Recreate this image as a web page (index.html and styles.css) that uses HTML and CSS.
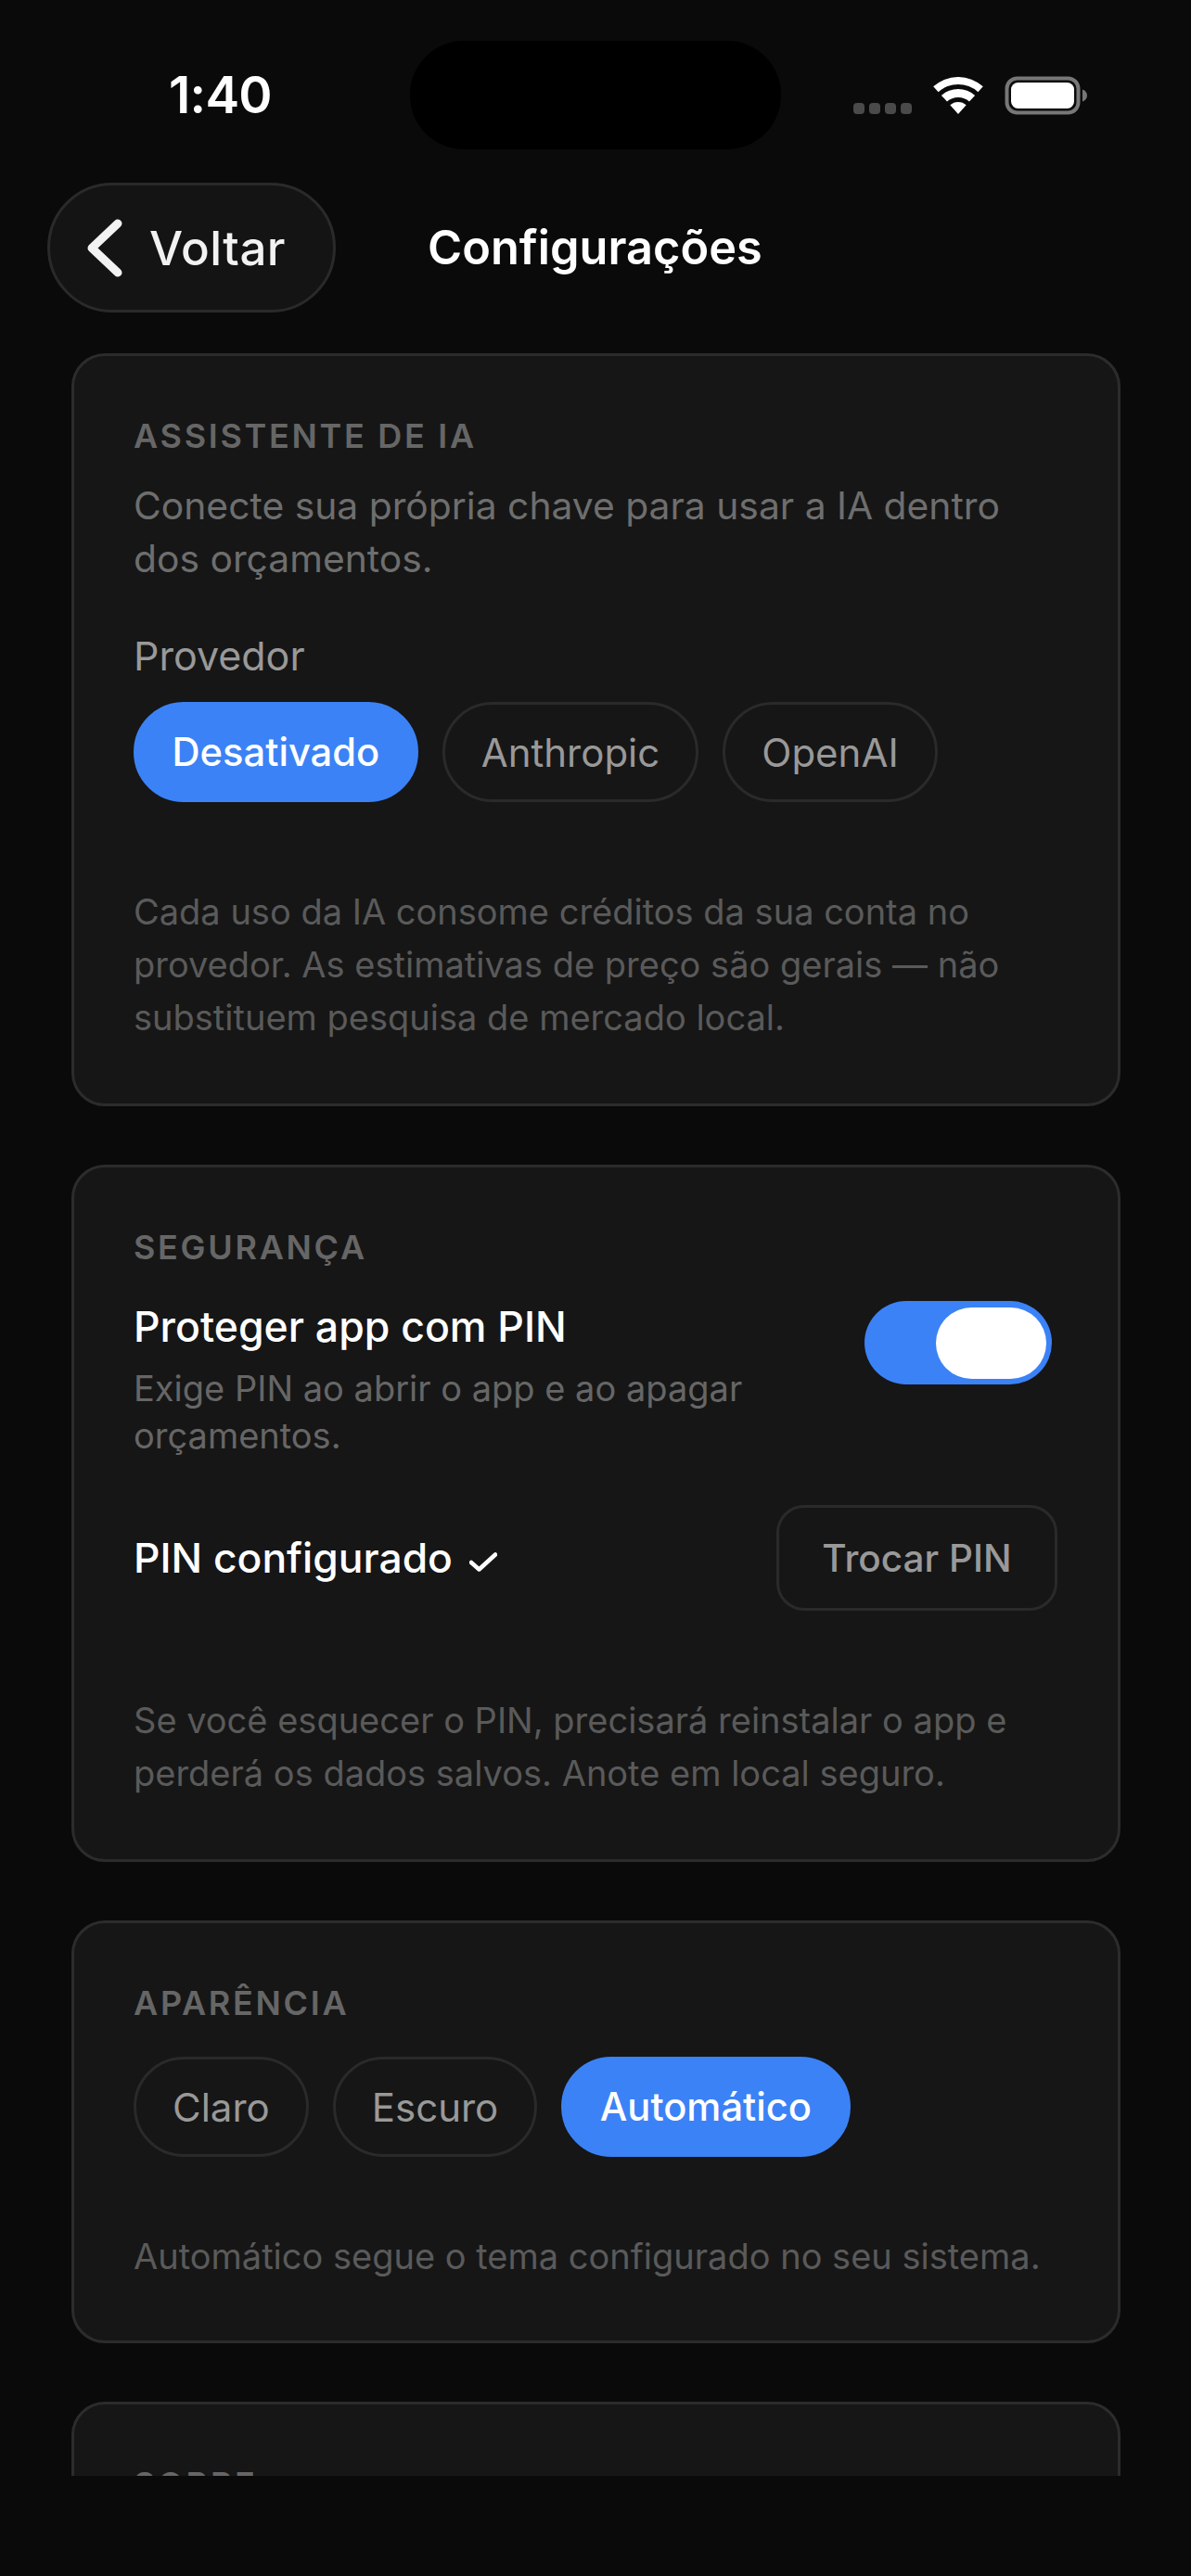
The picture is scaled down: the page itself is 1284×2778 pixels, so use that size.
FILE: index.html
```html
<!DOCTYPE html>
<html lang="pt-BR">
<head>
<meta charset="utf-8">
<title>Configurações</title>
<link rel="stylesheet" href="styles.css">
</head>
<body>
<div class="screen">
  <div class="status">
    <div class="time">1:40</div>
    <div class="island"></div>
    <div class="status-icons">
      <div class="signal"><i></i><i></i><i></i><i></i></div>
      <svg class="wifi" width="54" height="40" viewBox="0 0 54 40"><path fill="#fff" d="M.2 10.3A40 40 0 0 1 53.8 10.3L48.4 16.2A32 32 0 0 0 5.6 16.2Z"/><path fill="#fff" d="M8.9 19.9A27 27 0 0 1 45.1 19.9L39 26.6A18 18 0 0 0 15 26.6Z"/><path fill="#fff" d="M18.3 30.3A13 13 0 0 1 35.7 30.3L27 40Z"/></svg>
      <svg class="battery" width="89" height="42" viewBox="0 0 89 42"><rect x="2.5" y="2.5" width="77" height="37" rx="11" fill="none" stroke="#777" stroke-width="4"/><rect x="7" y="7" width="68" height="28" rx="7.5" fill="#fff"/><path fill="#777" d="M84 14.500C87 15.500 89 18 89 21S87 26.500 84 27.500Z"/></svg>
    </div>
  </div>
  <header class="topbar">
    <button class="back">
      <svg width="44" height="66" viewBox="0 0 44 66"><path d="M37 7 9 33.500 37 60" fill="none" stroke="#f2f2f2" stroke-width="9" stroke-linecap="round" stroke-linejoin="round"/></svg>
      <span>Voltar</span>
    </button>
    <h1 class="title">Configurações</h1>
  </header>
  <main class="scroll">
    <section class="card">
      <h2 class="label">ASSISTENTE DE IA</h2>
      <p class="desc">Conecte sua própria chave para usar a IA dentro dos orçamentos.</p>
      <div class="field">Provedor</div>
      <div class="chips chips-provider">
        <span class="chip active">Desativado</span>
        <span class="chip">Anthropic</span>
        <span class="chip">OpenAI</span>
      </div>
      <p class="note note-gap">Cada uso da IA consome créditos da sua conta no provedor. As estimativas de preço são gerais — não substituem pesquisa de mercado local.</p>
    </section>
    <section class="card">
      <h2 class="label">SEGURANÇA</h2>
      <div class="row-pin">
        <div class="row-text">
          <div class="row-title">Proteger app com PIN</div>
          <div class="row-sub">Exige PIN ao abrir o app e ao apagar orçamentos.</div>
        </div>
        <div class="toggle"><div class="knob"></div></div>
      </div>
      <div class="row-change">
        <div class="pin-state">PIN configurado <svg class="check" width="30" height="21" viewBox="0 0 30 21"><path d="M2 11 10.500 18.500 28 2.500" fill="none" stroke="#fff" stroke-width="4.500" stroke-linecap="round" stroke-linejoin="round"/></svg></div>
        <button class="outline">Trocar PIN</button>
      </div>
      <p class="note note-gap">Se você esquecer o PIN, precisará reinstalar o app e perderá os dados salvos. Anote em local seguro.</p>
    </section>
    <section class="card">
      <h2 class="label">APARÊNCIA</h2>
      <div class="chips chips-theme">
        <span class="chip">Claro</span>
        <span class="chip">Escuro</span>
        <span class="chip active">Automático</span>
      </div>
      <p class="note note-gap-small">Automático segue o tema configurado no seu sistema.</p>
    </section>
    <section class="card">
      <h2 class="label">SOBRE</h2>
    </section>
  </main>
</div>
</body>
</html>
```

FILE: styles.css
```css
* { box-sizing: border-box; }
html, body { margin: 0; padding: 0; background: #0a0a0a; }
body { font-family: Inter, "Noto Sans", sans-serif; color: #fff; }
.screen { width: 1284px; height: 2778px; overflow: hidden; background: #0a0a0a; }

.status { display: flex; align-items: flex-start; height: 161px; padding: 44px 0 0 182px; }
.time { width: 260px; height: 117px; font-size: 55px; font-weight: 600; line-height: 117px; letter-spacing: -0.700px; }
.island { width: 400px; height: 117px; border-radius: 58px; background: #000; }
.status-icons { display: flex; align-items: flex-end; height: 42px; margin: 38px 0 0 78px; }
.signal { display: flex; gap: 5px; width: 86px; padding-bottom: 1px; }
.signal i { display: block; width: 12px; height: 12px; border-radius: 4px; background: #4a4a4a; }
.wifi { display: block; margin-bottom: 1px; }
.battery { display: block; margin-left: 23px; }

.topbar { display: flex; align-items: center; gap: 99px; height: 140px; margin-top: 36px; padding-left: 51px; }
.back { display: flex; align-items: center; gap: 27px; width: 311px; height: 140px; padding: 0 0 0 36px; border: 3px solid #2a2a2a; border-radius: 70px; background: #141414; color: #f2f2f2; font: 500 51px Inter, sans-serif; letter-spacing: 0.500px; }
.back svg { display: block; flex: none; }
.title { margin: 0; font-size: 50.500px; font-weight: 600; line-height: 66px; color: #fff; }

.scroll { display: flex; flex-direction: column; gap: 63px; height: 2289px; margin-top: 44px; padding: 0 76px 0 77px; overflow: hidden; }
.card { flex: none; padding: 64px 63px 64px 64px; border: 3px solid #2c2c2c; border-radius: 36px; background: #161616; }
.label { margin: 0; font-size: 36px; font-weight: 600; line-height: 44px; letter-spacing: 2.700px; color: #666; }
.desc { margin: 25px 0 0; font-size: 40.800px; line-height: 57px; color: #6e6e6e; }
.field { margin-top: 48px; font-size: 43px; line-height: 57px; color: #999; }

.chips { display: flex; gap: 26px; }
.chips-provider { margin-top: 21px; }
.chips-theme { margin-top: 36px; }
.chip { display: flex; align-items: center; height: 108px; padding: 0 39px; border: 3px solid #2a2a2a; border-radius: 54px; font-size: 42px; color: #999; }
.chip.active { padding: 0 38.500px; border-color: #3b82f6; background: #3b82f6; color: #fff; font-size: 41.700px; font-weight: 450; }

.note { margin: 0; font-size: 38px; line-height: 57px; color: #5a5a5a; }
.note-gap { margin-top: 90px; }
.note-gap-small { margin: 79px 0 -2px; }

.row-pin { display: flex; align-items: flex-start; justify-content: space-between; margin-top: 36px; }
.row-text { width: 700px; }
.row-title { font-size: 44.600px; font-weight: 500; line-height: 57px; color: #fff; }
.row-sub { margin-top: 12px; font-size: 38px; line-height: 51px; color: #666; }
.toggle { display: flex; align-items: center; justify-content: flex-end; flex: none; width: 202px; height: 90px; margin-right: 8px; padding-right: 6px; border-radius: 45px; background: #3b82f6; }
.knob { width: 119px; height: 77px; border-radius: 39px; background: #fff; }

.row-change { display: flex; align-items: center; justify-content: space-between; margin: 49px 2px 0 0; }
.pin-state { font-size: 44.400px; font-weight: 500; line-height: 57px; color: #fff; }
.check { display: inline-block; margin-left: 6px; vertical-align: 1px; }
.outline { width: 303px; height: 114px; padding: 0; border: 3px solid #2a2a2a; border-radius: 30px; background: transparent; color: #999; font: 500 40.500px Inter, sans-serif; }
```
